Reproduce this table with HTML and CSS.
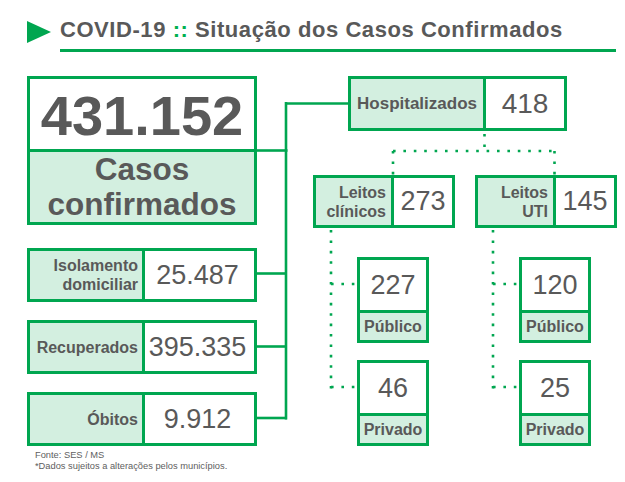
FILE: index.html
```html
<!DOCTYPE html>
<html lang="pt-BR">
<head>
<meta charset="utf-8">
<title>COVID-19 :: Situação dos Casos Confirmados</title>
<link rel="stylesheet" href="styles.css">
</head>
<body>
<div class="page">
  <header class="head">
    <svg class="tri" width="24" height="22" viewBox="0 0 24 22"><polygon points="0,0 24,11 0,22"/></svg>
    <h1 class="title">COVID-19 <span class="sep">::</span> Situação dos Casos Confirmados</h1>
  </header>
  <main class="diagram">
    <section class="left">
      <div class="total">
        <div class="total-num">431.152</div>
        <div class="total-label">Casos<br>confirmados</div>
      </div>
      <div class="row"><div class="row-label">Isolamento<br>domiciliar</div><div class="row-value">25.487</div></div>
      <div class="row"><div class="row-label">Recuperados</div><div class="row-value">395.335</div></div>
      <div class="row"><div class="row-label">Óbitos</div><div class="row-value">9.912</div></div>
      <footer class="note">
        <p>Fonte: SES / MS</p>
        <p>*Dados sujeitos a alterações pelos municípios.</p>
      </footer>
    </section>
    <section class="right">
      <div class="hosp"><div class="hosp-label">Hospitalizados</div><div class="hosp-value">418</div></div>
      <div class="beds">
        <div class="bed-col">
          <div class="bed"><div class="bed-label">Leitos<br>clínicos</div><div class="bed-value">273</div></div>
          <div class="sub first"><div class="sub-num">227</div><div class="sub-label">Público</div></div>
          <div class="sub"><div class="sub-num">46</div><div class="sub-label">Privado</div></div>
        </div>
        <div class="bed-col">
          <div class="bed"><div class="bed-label">Leitos<br>UTI</div><div class="bed-value">145</div></div>
          <div class="sub first"><div class="sub-num">120</div><div class="sub-label">Público</div></div>
          <div class="sub"><div class="sub-num">25</div><div class="sub-label">Privado</div></div>
        </div>
      </div>
    </section>
  </main>
  <svg class="edges" width="625" height="482" viewBox="0 0 625 482">
    <g class="solid">
      <path d="M257 150.5 H287.5"/>
      <path d="M286 102 V419.5"/>
      <path d="M286 103.5 H349"/>
      <path d="M257 273.5 H287"/>
      <path d="M257 346.5 H287"/>
      <path d="M257 418 H287"/>
    </g>
    <g class="dots">
      <path d="M484.5 134 V151"/>
      <path d="M393 151 H556"/>
      <path d="M393 151 V175"/>
      <path d="M554.5 151 V175"/>
      <path d="M331 230 V390"/>
      <path d="M331 284 H357"/>
      <path d="M331 387 H357"/>
      <path d="M493 230 V390"/>
      <path d="M493 284 H520"/>
      <path d="M493 387 H520"/>
    </g>
  </svg>
</div>
</body>
</html>
```
FILE: styles.css
```css
* { box-sizing: border-box; }

body {
  margin: 0;
  background: #ffffff;
  font-family: "Liberation Sans", Arial, sans-serif;
  color: #595959;
}

.page {
  position: relative;
  width: 625px;
  height: 482px;
  overflow: hidden;
}

/* header */
.head {
  display: flex;
  align-items: flex-start;
  gap: 9px;
  padding: 17px 9px 0 27px;
}

.tri {
  flex: none;
  margin-top: 4px;
  fill: #00a650;
}

.title {
  flex: 1;
  margin: 0;
  padding-bottom: 6px;
  border-bottom: 3px solid #00a650;
  font-size: 22px;
  line-height: 26px;
  font-weight: 700;
  letter-spacing: 0.56px;
  color: #595959;
  white-space: nowrap;
}

.sep { color: #00b050; }

/* diagram */
.diagram {
  display: flex;
  gap: 56px;
  margin-top: 24px;
  padding-left: 27px;
}

.left {
  width: 230px;
  flex: none;
  display: flex;
  flex-direction: column;
}

.total {
  border: 3px solid #00a650;
  margin-bottom: 23px;
}

.total-num {
  height: 70px;
  padding-top: 5px;
  text-align: center;
  font-size: 56px;
  line-height: 64px;
  font-weight: 700;
}

.total-label {
  height: 73px;
  border-top: 3px solid #00a650;
  background: #d3efe0;
  text-align: center;
  font-size: 31.5px;
  line-height: 35px;
  font-weight: 700;
}

.row {
  display: flex;
  height: 54px;
  border: 3px solid #00a650;
  margin-bottom: 18px;
}

.row:last-of-type { margin-bottom: 0; }

.row-label {
  width: 115px;
  flex: none;
  display: flex;
  align-items: center;
  justify-content: flex-end;
  padding-right: 4px;
  border-right: 3px solid #00a650;
  background: #d3efe0;
  text-align: right;
  font-size: 16px;
  line-height: 19px;
  font-weight: 700;
}

.row-value {
  flex: 1;
  display: flex;
  align-items: center;
  justify-content: center;
  padding-right: 4px;
  font-size: 27px;
  font-weight: 400;
}

.note {
  margin-top: 4px;
  padding-left: 8px;
  font-size: 9.3px;
  line-height: 10.5px;
  color: #606060;
}

.note p { margin: 0; white-space: nowrap; }

/* right side */
.right {
  display: flex;
  flex-direction: column;
}

.hosp {
  display: flex;
  width: 219px;
  height: 55px;
  margin-left: 35px;
  border: 3px solid #00a650;
}

.hosp-label {
  width: 135px;
  flex: none;
  display: flex;
  align-items: center;
  justify-content: center;
  border-right: 3px solid #00a650;
  background: #d3efe0;
  font-size: 17px;
  font-weight: 700;
}

.hosp-value {
  flex: 1;
  display: flex;
  align-items: center;
  justify-content: center;
  font-size: 28px;
}

.beds {
  display: flex;
  gap: 20px;
  margin-top: 44px;
}

.bed-col {
  width: 142px;
  display: flex;
  flex-direction: column;
}

.bed {
  display: flex;
  height: 53px;
  border: 3px solid #00a650;
}

.bed-label {
  width: 78px;
  flex: none;
  display: flex;
  align-items: center;
  justify-content: flex-end;
  padding-right: 5px;
  border-right: 3px solid #00a650;
  background: #d3efe0;
  text-align: right;
  font-size: 16px;
  line-height: 19px;
  font-weight: 700;
}

.bed-value {
  flex: 1;
  display: flex;
  align-items: center;
  justify-content: center;
  font-size: 27px;
}

.sub {
  width: 72px;
  margin-left: 44px;
  margin-top: 17px;
  border: 3px solid #00a650;
}

.sub.first { margin-top: 29px; }

.sub-num {
  height: 50px;
  display: flex;
  align-items: center;
  justify-content: center;
  font-size: 27px;
}

.sub-label {
  height: 30px;
  border-top: 3px solid #00a650;
  background: #d3efe0;
  display: flex;
  align-items: center;
  justify-content: center;
  font-size: 16px;
  font-weight: 700;
}

/* connectors over the diagram */
.edges {
  position: absolute;
  left: 0;
  top: 0;
  pointer-events: none;
  fill: none;
}

.edges .solid path {
  stroke: #00a650;
  stroke-width: 2.6;
}

.edges .dots path {
  stroke: #00a650;
  stroke-width: 2.6;
  stroke-dasharray: 2.6 7.8;
}
```
